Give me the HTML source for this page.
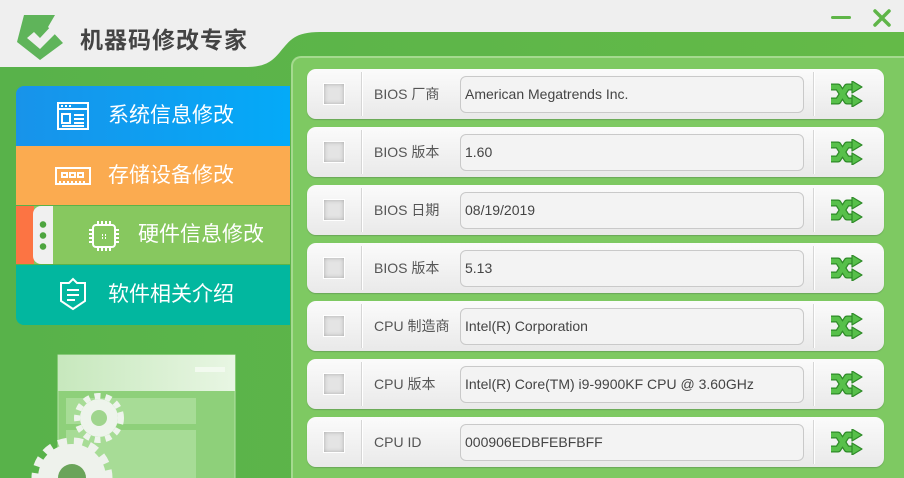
<!DOCTYPE html>
<html><head><meta charset="utf-8"><style>
*{margin:0;padding:0;box-sizing:border-box}
html,body{width:904px;height:478px;overflow:hidden}
body{position:relative;font-family:"Liberation Sans","Noto Sans CJK SC",sans-serif;background:linear-gradient(90deg,#58b24a,#64ba48)}
.hdr{position:absolute;left:0;top:0;width:904px;height:478px}
.title{position:absolute;left:80px;top:21px;font-size:23px;font-weight:bold;color:#444;letter-spacing:1px}
.menu{position:absolute;left:16px;width:274px;color:#fff;font-size:21px}
.menu span{position:absolute;top:0;line-height:60px}
.panel{position:absolute;left:291px;top:56px;width:613px;height:422px;border-radius:10px 0 0 0;background:#7ec962;border:2px solid #a5da8f;border-bottom:none;border-right:none}
.row{position:absolute;left:307px;width:577px;height:50px;border-radius:9px;background:linear-gradient(#fbfbfb,#e9e9e9);box-shadow:0 1px 1px #6aa658}
.cb{position:absolute;left:16px;top:14px;width:22px;height:22px;background:#e4e4e4;border:1px solid #fff;box-shadow:inset 0 0 4px #aaa}
.d1{position:absolute;left:54px;top:3px;width:1px;height:44px;background:#d6d6d6;box-shadow:1px 0 #fff}
.d2{position:absolute;left:506px;top:3px;width:1px;height:44px;background:#d6d6d6;box-shadow:1px 0 #fff}
.lb{position:absolute;left:67px;top:0;line-height:50px;font-size:14px;color:#555}
.in{position:absolute;left:153px;top:7px;width:344px;height:37px;border:1px solid #c9c9c9;border-radius:6px;background:#f3f3f3;font-size:14px;color:#444;line-height:35px;padding-left:4px}
.sh{position:absolute;left:522px;top:12px}
</style></head><body>
<svg class="hdr" width="904" height="478">
<path d="M0 0H904V32H320C295 32 290 40 280 52C270 64 262 67 245 67H0Z" fill="#efefef"/>
<path d="M24 15H55L48 27L63 43L40 60L17 42Z" fill="#5fb45a"/>
<path d="M27 38L34 32L40 38L53 24L59 30L40 49Z" fill="#efefef"/>
<rect x="831" y="16" width="20" height="3" rx="1.5" fill="#5fb548"/>
<path d="M875 11L889 25M889 11L875 25" stroke="#5fb548" stroke-width="3.5" stroke-linecap="round"/>
<defs><linearGradient id="g" x1="0" x2="1"><stop offset="0" stop-color="#c7e8bd"/><stop offset="1" stop-color="#e8f6e3"/></linearGradient>
<symbol id="s" viewBox="0 0 34 26"><g fill="none" stroke-linejoin="round"><path d="M2 6H9L18 20H24M2 20H9L18 6H24" stroke="#2e8a28" stroke-width="7"/><path d="M2 6H9L18 20H24M2 20H9L18 6H24" stroke="#57c04a" stroke-width="4.5"/></g><g fill="#57c04a" stroke="#2e8a28" stroke-width="1.2" stroke-linejoin="round"><path d="M23 0L33 6L23 12Z"/><path d="M23 14L33 20L23 26Z"/></g></symbol></defs>
<rect x="58" y="355" width="177" height="130" fill="#8ed07a" stroke="#b5e2a7"/>
<rect x="58" y="355" width="177" height="36" fill="url(#g)"/>
<rect x="195" y="367" width="30" height="5" fill="#f2faef"/>
<rect x="66" y="398" width="130" height="26" fill="#a7dc96"/>
<rect x="66" y="430" width="130" height="50" fill="#a7dc96"/>
<circle cx="99" cy="418" r="22" fill="none" stroke="#eef4ec" stroke-width="6" stroke-dasharray="6 5"/>
<circle cx="99" cy="418" r="19" fill="#eef4ec"/><circle cx="99" cy="418" r="8" fill="#9fd58d"/>
<circle cx="72" cy="478" r="37" fill="none" stroke="#eef2ec" stroke-width="7" stroke-dasharray="9 7"/>
<circle cx="72" cy="478" r="34" fill="#eef2ec"/><circle cx="72" cy="478" r="14" fill="#6aa45a"/>
</svg>
<div class="title">机器码修改专家</div>
<div class="menu" style="top:86px;height:60px;background:linear-gradient(90deg,#1893ea,#04aaf8);border-radius:8px 0 0 0">
<svg style="position:absolute;left:40px;top:15px" width="34" height="30" fill="none" stroke="#fff" stroke-width="2"><rect x="2" y="2" width="30" height="26"/><path d="M2 8H32M5 5h2M9 5h2M13 5h2M6 13h8v9H6zM18 14h10M18 18h10M18 22h10M6 25h22"/></svg>
<span style="left:92px">系统信息修改</span></div>
<div class="menu" style="top:146px;height:59px;background:#fbab50">
<svg style="position:absolute;left:38px;top:20px" width="38" height="20" fill="none" stroke="#fff" stroke-width="2"><path d="M2 2H36V18H2ZM2 2v4M36 2v4M6 18v-3M10 18v-3M14 18v-3M18 18v-3M22 18v-3M26 18v-3M30 18v-3"/><rect x="8" y="7" width="5" height="4"/><rect x="16" y="7" width="5" height="4"/><rect x="24" y="7" width="5" height="4"/></svg>
<span style="left:92px">存储设备修改</span></div>
<div class="menu" style="top:206px;height:58px;background:#87c85f">
<div style="position:absolute;left:0;top:0;width:18px;height:58px;background:#fc7443"></div>
<div style="position:absolute;left:17px;top:0;width:20px;height:58px;background:#f0f0f0;border-radius:8px 0 0 8px"></div>
<div style="position:absolute;left:23px;top:13px;width:8px;height:32px;background:radial-gradient(circle,#4ea540 3px,transparent 3.5px) 0 0/8px 11px"></div>
<svg style="position:absolute;left:71px;top:13px" width="34" height="34" fill="none" stroke="#fff" stroke-width="2"><rect x="6" y="6" width="22" height="22" rx="3"/><path d="M11 2v4M15 2v4M19 2v4M23 2v4M11 28v4M15 28v4M19 28v4M23 28v4M2 11h4M2 15h4M2 19h4M2 23h4M28 11h4M28 15h4M28 19h4M28 23h4M15 16h1M18 16h1M15 19h1M18 19h1"/></svg>
<span style="left:122px;line-height:58px">硬件信息修改</span></div>
<div class="menu" style="top:265px;height:60px;background:#02b79f;border-radius:0 0 0 8px">
<svg style="position:absolute;left:43px;top:12px" width="28" height="34" fill="none" stroke="#fff" stroke-width="2"><path d="M2 6L10 6L14 2L18 6L26 6V24L14 32L2 24Z M8 13h12M8 18h12M8 23h8"/></svg>
<span style="left:92px">软件相关介绍</span></div>
<div class="panel"></div>
<div class="row" style="top:69px"><div class="cb"></div><div class="d1"></div><div class="lb">BIOS 厂商</div><div class="in">American Megatrends Inc.</div><div class="d2"></div><svg class="sh" width="34" height="26"><use href="#s"/></svg></div>
<div class="row" style="top:127px"><div class="cb"></div><div class="d1"></div><div class="lb">BIOS 版本</div><div class="in">1.60</div><div class="d2"></div><svg class="sh" width="34" height="26"><use href="#s"/></svg></div>
<div class="row" style="top:185px"><div class="cb"></div><div class="d1"></div><div class="lb">BIOS 日期</div><div class="in">08/19/2019</div><div class="d2"></div><svg class="sh" width="34" height="26"><use href="#s"/></svg></div>
<div class="row" style="top:243px"><div class="cb"></div><div class="d1"></div><div class="lb">BIOS 版本</div><div class="in">5.13</div><div class="d2"></div><svg class="sh" width="34" height="26"><use href="#s"/></svg></div>
<div class="row" style="top:301px"><div class="cb"></div><div class="d1"></div><div class="lb">CPU 制造商</div><div class="in">Intel(R) Corporation</div><div class="d2"></div><svg class="sh" width="34" height="26"><use href="#s"/></svg></div>
<div class="row" style="top:359px"><div class="cb"></div><div class="d1"></div><div class="lb">CPU 版本</div><div class="in">Intel(R) Core(TM) i9-9900KF CPU @ 3.60GHz</div><div class="d2"></div><svg class="sh" width="34" height="26"><use href="#s"/></svg></div>
<div class="row" style="top:417px"><div class="cb"></div><div class="d1"></div><div class="lb">CPU ID</div><div class="in">000906EDBFEBFBFF</div><div class="d2"></div><svg class="sh" width="34" height="26"><use href="#s"/></svg></div>
</body></html>
